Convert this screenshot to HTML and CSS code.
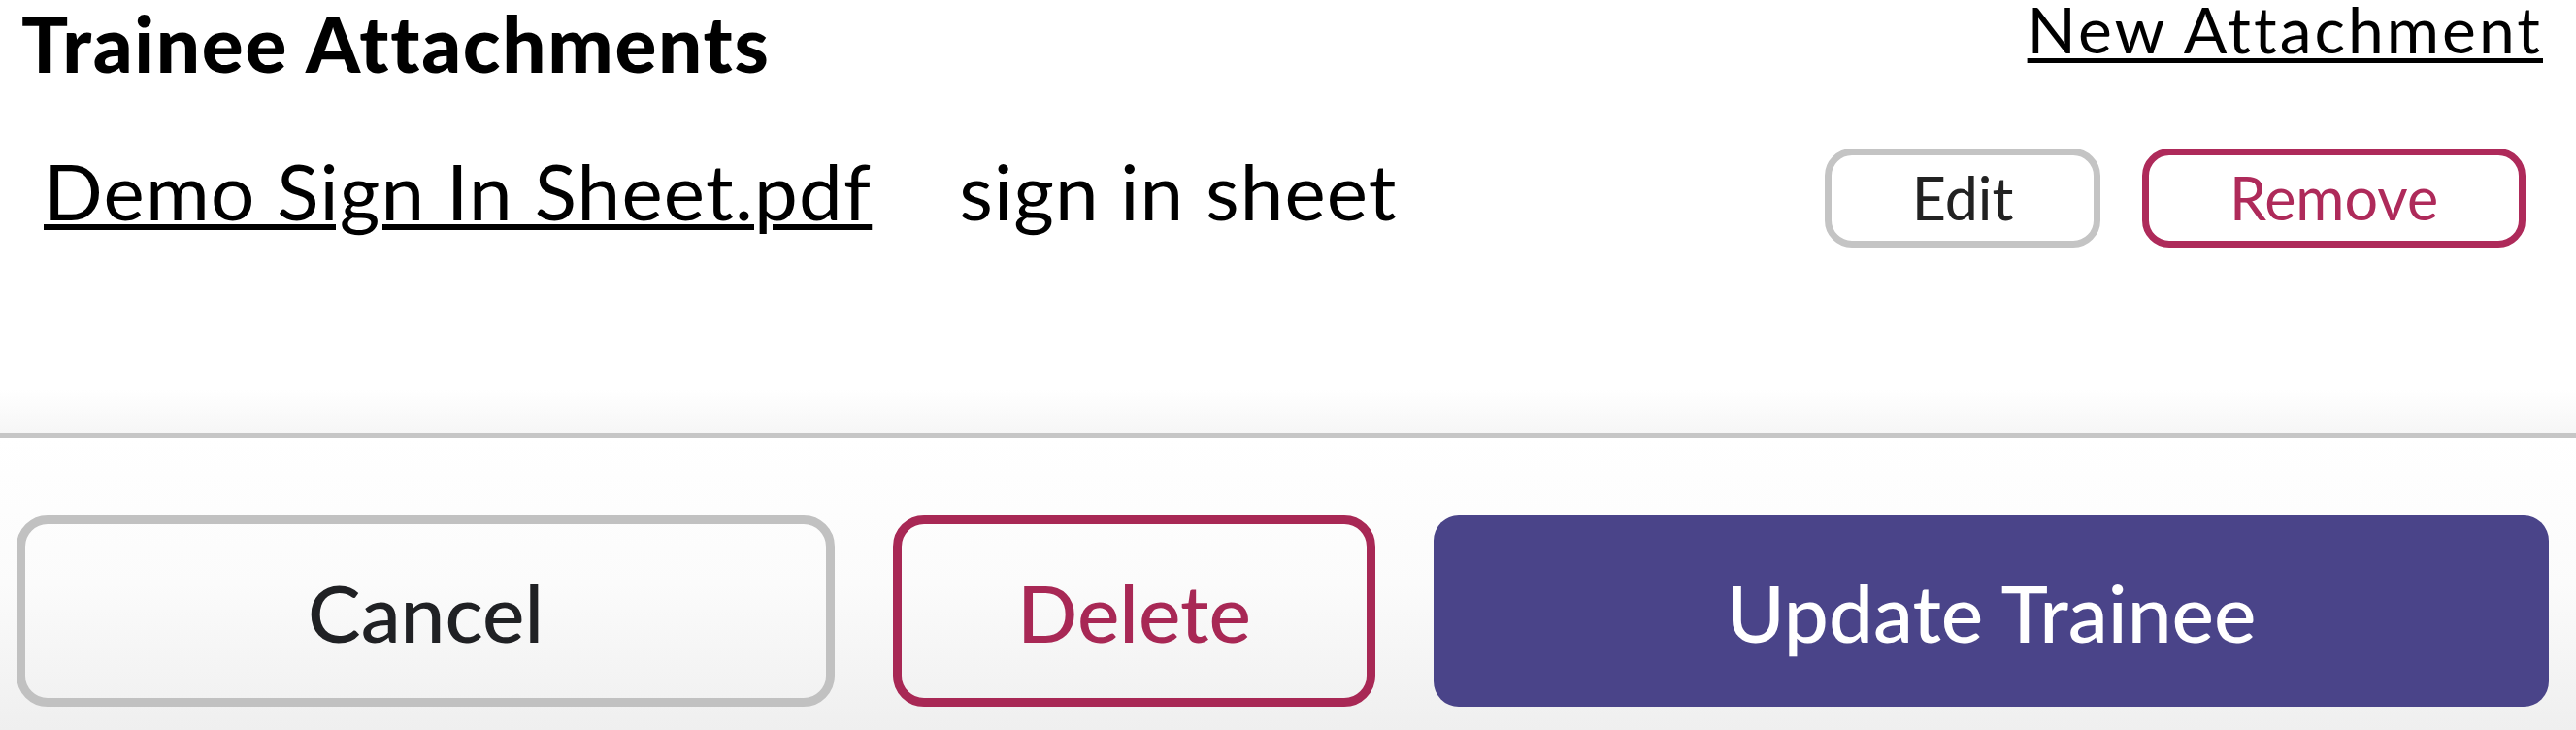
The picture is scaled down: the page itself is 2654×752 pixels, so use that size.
FILE: index.html
```html
<!DOCTYPE html>
<html lang="en">
<head>
<meta charset="utf-8">
<title>Edit Trainee</title>
<link rel="stylesheet" href="styles.css">
</head>
<body>
<div class="modal">
  <section class="attachments">
    <header class="attachments-head">
      <h2 class="attachments-title">Trainee Attachments</h2>
      <a class="link new-link" href="#">New Attachment</a>
    </header>
    <ul class="attachment-list">
      <li class="attachment">
        <a class="link file-link" href="#">Demo Sign In Sheet.pdf</a>
        <span class="file-note">sign in sheet</span>
        <div class="row-actions">
          <button class="btn-sm btn-sm--neutral" type="button">Edit</button>
          <button class="btn-sm btn-sm--danger" type="button">Remove</button>
        </div>
      </li>
    </ul>
  </section>
  <footer class="modal-footer">
    <button class="btn btn--neutral" type="button">Cancel</button>
    <button class="btn btn--danger" type="button">Delete</button>
    <button class="btn btn--primary" type="button">Update Trainee</button>
  </footer>
</div>
</body>
</html>
```

FILE: styles.css
```css
* {
  box-sizing: border-box;
}

html,
body {
  margin: 0;
  padding: 0;
  background: #ffffff;
}

body {
  font-family: Lato, "Open Sans", sans-serif;
  color: #000000;
}

.modal {
  width: 2654px;
  height: 752px;
  display: flex;
  flex-direction: column;
}

/* ---------- attachments block ---------- */

.attachments {
  height: 446px;
  padding: 0 34px 0 22px;
  background: linear-gradient(to bottom, #ffffff 90%, #f6f6f6 100%);
}

.attachments-head {
  display: flex;
  justify-content: space-between;
  align-items: flex-start;
}

.attachments-title {
  margin: 0;
  font-size: 80px;
  line-height: 88px;
  font-weight: 900;
  letter-spacing: 1.7px;
  color: #000000;
}

.link {
  color: #000000;
  text-decoration: underline;
  text-decoration-skip-ink: auto;
}

.new-link {
  padding-top: 2px;
  font-size: 66px;
  line-height: 56px;
  font-weight: 400;
  letter-spacing: 3px;
  text-decoration-thickness: 5px;
  text-underline-offset: 5px;
}

.attachment-list {
  list-style: none;
  margin: 60px 0 0;
  padding: 0 18px 0 23px;
}

.attachment {
  display: flex;
  align-items: baseline;
}

.file-link {
  font-size: 80px;
  line-height: 96px;
  letter-spacing: 1.2px;
  text-decoration-thickness: 6px;
  text-underline-offset: 4px;
}

.file-note {
  margin-left: 90px;
  font-size: 80px;
  line-height: 96px;
  letter-spacing: 1.1px;
}

.row-actions {
  margin-left: auto;
  display: flex;
  align-items: baseline;
  gap: 43px;
}

.btn-sm {
  height: 102px;
  padding: 0;
  border: 7px solid #c4c4c4;
  border-radius: 28px;
  background: #ffffff;
  font-family: inherit;
  font-size: 61px;
  line-height: 73px;
  color: #222222;
  cursor: pointer;
}

.btn-sm--neutral {
  width: 284px;
}

.btn-sm--danger {
  width: 395px;
  border-color: #ae2a5a;
  color: #ae2a5a;
}

/* ---------- footer actions ---------- */

.modal-footer {
  flex: 1;
  display: grid;
  grid-template-columns: 843px 497px 1fr;
  gap: 60px;
  align-items: start;
  padding: 80px 28px 0 17px;
  border-top: 5px solid #c6c6c6;
  background: linear-gradient(to bottom, #ffffff 0%, #fbfbfb 50%, #efefef 100%);
}

.btn {
  height: 197px;
  padding: 0;
  border: 9px solid #c1c1c1;
  border-radius: 32px;
  background: transparent;
  font-family: inherit;
  font-size: 82px;
  font-weight: 500;
  color: #202124;
  cursor: pointer;
}

.btn--danger {
  border-color: #a82855;
  color: #a82855;
}

.btn--primary {
  border: none;
  border-radius: 26px;
  background: #4a4489;
  color: #ffffff;
}
```
